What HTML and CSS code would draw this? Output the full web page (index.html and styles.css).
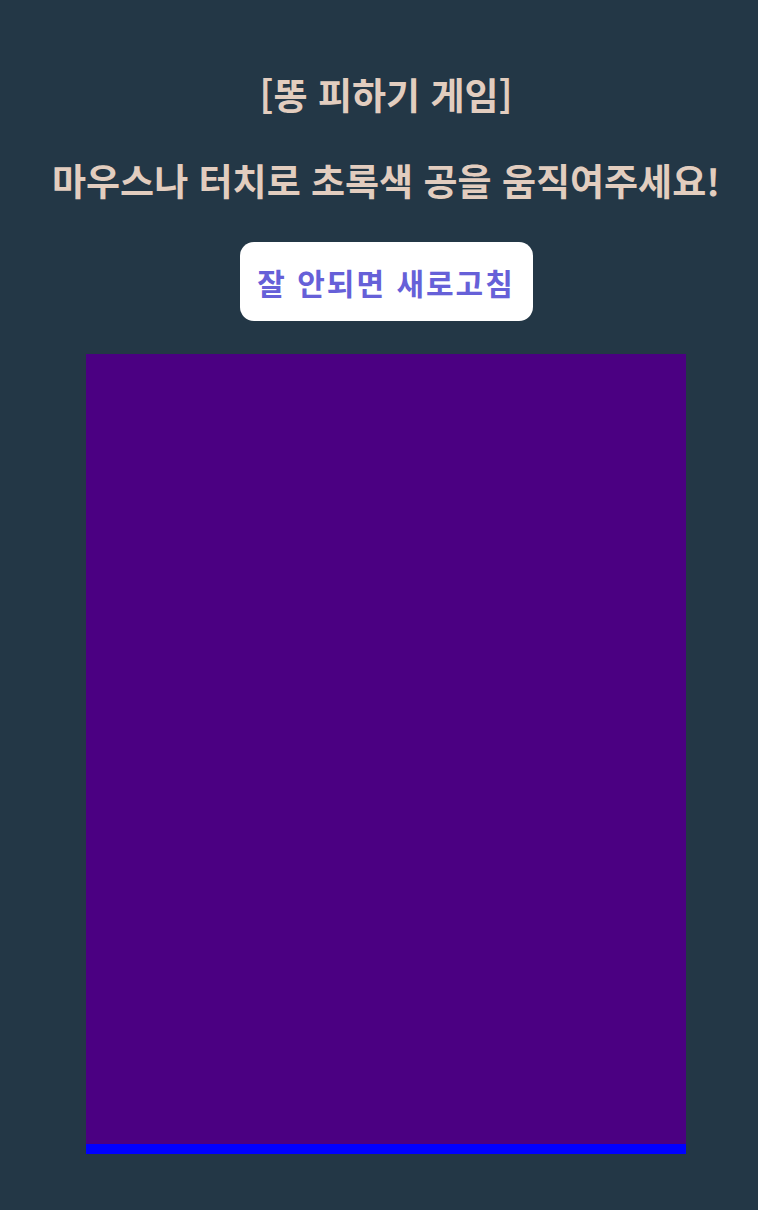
FILE: index.html
```html
<!DOCTYPE html>
<html lang="ko">
<head>
<meta charset="utf-8">
<title>똥 피하기 게임</title>
<link rel="stylesheet" href="styles.css">
</head>
<body>
<main class="page">
  <h1 class="title">[똥 피하기 게임]</h1>
  <h2 class="subtitle">마우스나 터치로 초록색 공을 움직여주세요!</h2>
  <button class="reload">잘 안되면 새로고침</button>
  <div class="game">
    <div class="field"></div>
    <div class="ground"></div>
  </div>
</main>
</body>
</html>
```

FILE: styles.css
```css
html, body {
  margin: 0;
  padding: 0;
  background: #233746;
}
.page {
  display: flex;
  flex-direction: column;
  align-items: center;
  font-family: "Noto Sans CJK KR", "Noto Sans", sans-serif;
  color: #e2cdbf;
  padding-top: 71px;
  padding-left: 14px;
}
.title {
  margin: 0;
  font-size: 37px;
  line-height: 46px;
  font-weight: 700;
}
.subtitle {
  margin: 40px 0 0;
  font-size: 37px;
  line-height: 46px;
  font-weight: 700;
  white-space: nowrap;
}
.reload {
  margin-top: 39px;
  width: 293px;
  height: 79px;
  border: none;
  border-radius: 14px;
  background: #ffffff;
  color: #6660d8;
  font-family: "Noto Sans CJK KR", "Noto Sans", sans-serif;
  font-size: 30px;
  font-weight: 700;
  letter-spacing: 2px;
  padding: 0;
}
.game {
  margin-top: 33px;
  width: 600px;
  display: flex;
  flex-direction: column;
}
.field {
  height: 790px;
  background: #4b0082;
}
.ground {
  height: 10px;
  background: #0000ff;
}
```
